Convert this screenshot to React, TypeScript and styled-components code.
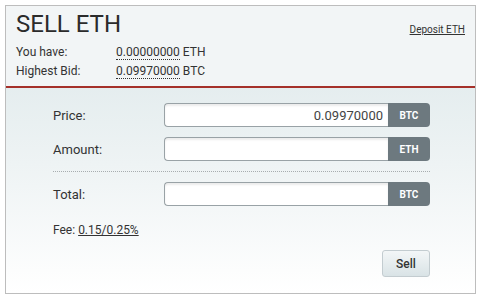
import React from "react";
import styled, { createGlobalStyle } from "styled-components";

const Global = createGlobalStyle`
  html, body { margin: 0; padding: 0; background: #ffffff; }
  body { font-family: Roboto, "Liberation Sans", Arial, sans-serif; color: #333; }
`;

const Panel = styled.div`
  box-sizing: border-box;
  width: 471px;
  height: 289px;
  margin: 5px;
  border: 1px solid #bdbdbd;
  display: flex;
  flex-direction: column;
  background: linear-gradient(to bottom, #dbe7e9 0%, #eef3f4 55%, #ffffff 100%);
`;

const Header = styled.div`
  box-sizing: border-box;
  height: 82px;
  padding: 4px 10px 0 10px;
  background: #f2f5f6;
  border-bottom: 2px solid #a5302a;
`;

const TitleRow = styled.div`
  display: flex;
  justify-content: space-between;
  align-items: flex-start;
`;

const Title = styled.h1`
  margin: 0;
  font-size: 24px;
  line-height: 28px;
  font-weight: 400;
  color: #2b2b2b;
`;

const DepositLink = styled.a`
  margin-top: 14px;
  font-size: 10px;
  line-height: 12px;
  color: #333;
  text-decoration: underline;
  cursor: pointer;
`;

const InfoGrid = styled.div`
  margin-top: 5px;
  display: grid;
  grid-template-columns: 100px auto;
  font-size: 12px;
  line-height: 19px;
  color: #333;
`;

const Dotted = styled.span`
  border-bottom: 1px dotted #333;
`;

const Form = styled.div`
  flex: 1;
  display: flex;
  flex-direction: column;
  padding: 15px 45px 0 47px;
`;

const Row = styled.div<{ $mt?: number }>`
  display: flex;
  align-items: center;
  height: 24px;
  margin-top: ${(p) => p.$mt ?? 0}px;
`;

const Label = styled.div`
  width: 111px;
  font-size: 13px;
  color: #333;
`;

const InputBox = styled.div`
  box-sizing: border-box;
  flex: 1;
  height: 24px;
  border: 1px solid #99a2a6;
  border-right: none;
  border-radius: 4px 0 0 4px;
  background: #fff;
  box-shadow: inset 0 2px 2px rgba(0, 0, 0, 0.08);
  display: flex;
  align-items: center;
  justify-content: flex-end;
  padding-right: 5px;
  font-size: 13px;
  color: #444;
`;

const Badge = styled.div`
  box-sizing: border-box;
  width: 42px;
  height: 24px;
  background: #6d797f;
  border-radius: 0 4px 4px 0;
  color: #fff;
  font-size: 10px;
  font-weight: 700;
  display: flex;
  align-items: center;
  justify-content: center;
`;

const Separator = styled.div`
  margin-top: 10px;
  border-top: 1px dotted #a8adaf;
`;

const Fee = styled.div`
  margin-top: 16px;
  font-size: 12px;
  line-height: 16px;
  color: #333;
`;

const Underlined = styled.span`
  text-decoration: underline;
`;

const Actions = styled.div`
  display: flex;
  justify-content: flex-end;
  margin-top: 12px;
`;

const SellButton = styled.button`
  box-sizing: border-box;
  width: 48px;
  height: 27px;
  border: 1px solid #c3ccd0;
  border-radius: 3px;
  background: linear-gradient(to bottom, #f3f6f7 0%, #d9e3e6 100%);
  font-family: Roboto, "Liberation Sans", Arial, sans-serif;
  font-size: 12px;
  font-weight: 500;
  color: #333;
  cursor: pointer;
`;

const fields = [
  { label: "Price:", value: "0.09970000", unit: "BTC", mt: 0 },
  { label: "Amount:", value: "", unit: "ETH", mt: 10 },
];

export default function App() {
  return (
    <>
      <Global />
      <Panel>
        <Header>
          <TitleRow>
            <Title>SELL ETH</Title>
            <DepositLink>Deposit ETH</DepositLink>
          </TitleRow>
          <InfoGrid>
            <span>You have:</span>
            <span>
              <Dotted>0.00000000</Dotted> ETH
            </span>
            <span>Highest Bid:</span>
            <span>
              <Dotted>0.09970000</Dotted> BTC
            </span>
          </InfoGrid>
        </Header>
        <Form>
          {fields.map((f) => (
            <Row key={f.label} $mt={f.mt}>
              <Label>{f.label}</Label>
              <InputBox>{f.value}</InputBox>
              <Badge>{f.unit}</Badge>
            </Row>
          ))}
          <Separator />
          <Row $mt={10}>
            <Label>Total:</Label>
            <InputBox />
            <Badge>BTC</Badge>
          </Row>
          <Fee>
            Fee: <Underlined>0.15/0.25%</Underlined>
          </Fee>
          <Actions>
            <SellButton>Sell</SellButton>
          </Actions>
        </Form>
      </Panel>
    </>
  );
}
